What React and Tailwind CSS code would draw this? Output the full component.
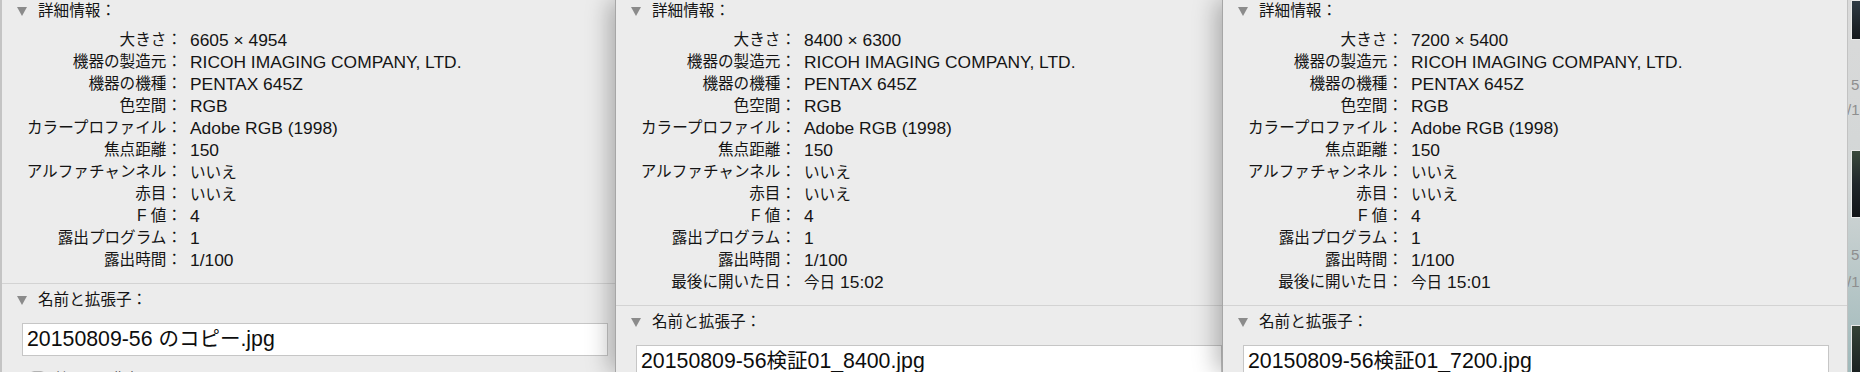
import React from 'react';

const J = ({ children }) => <span className="text-[15.6px]">{children}</span>;

const baseRows = [
  { label: '大きさ', value: null },
  { label: '機器の製造元', value: 'RICOH IMAGING COMPANY, LTD.' },
  { label: '機器の機種', value: 'PENTAX 645Z' },
  { label: '色空間', value: 'RGB' },
  { label: 'カラープロファイル', value: 'Adobe RGB (1998)' },
  { label: '焦点距離', value: '150' },
  { label: 'アルファチャンネル', value: <J>いいえ</J> },
  { label: '赤目', value: <J>いいえ</J> },
  { label: <>F <span>値</span></>, value: '4' },
  { label: '露出プログラム', value: '1' },
  { label: '露出時間', value: '1/100' }
];

const windows = [
  {
    size: '6605 × 4954',
    opened: null,
    file: <>20150809-56&nbsp;<span className="text-[20.5px]">のコピー</span>.jpg</>,
    frame: 'w-[615px] border-l-2 border-[#c4c4c4] z-0',
    checkbox: true
  },
  {
    size: '8400 × 6300',
    opened: '15:02',
    file: <>20150809-56<span className="text-[20.5px]">検証</span>01_8400.jpg</>,
    frame: 'w-[607px] border-l border-[#a6a6a6] z-10 shadow-[-6px_0_22px_rgba(0,0,0,0.28)]'
  },
  {
    size: '7200 × 5400',
    opened: '15:01',
    file: <>20150809-56<span className="text-[20.5px]">検証</span>01_7200.jpg</>,
    frame: 'w-[626px] border-l border-r border-l-[#a6a6a6] border-r-[#c2c2c2] z-20 shadow-[-6px_0_22px_rgba(0,0,0,0.28)]'
  }
];

function Triangle() {
  return (
    <svg width="10" height="9" viewBox="0 0 10 9" className="shrink-0">
      <polygon points="0,0 10,0 5,9" fill="#8b8b8b" />
    </svg>
  );
}

function SectionHeader({ children, className = '' }) {
  return (
    <div className={`flex h-[20px] items-center gap-[11px] pl-[15px] ${className}`}>
      <Triangle />
      <span className="text-[15.6px]">{children}</span>
    </div>
  );
}

function InfoWindow({ data }) {
  const rows = baseRows.map((row) => (row.value === null ? { ...row, value: data.size } : row));
  if (data.opened) {
    rows.push({ label: '最後に開いた日', value: <><J>今日</J> {data.opened}</> });
  }

  return (
    <div className={`relative h-[372px] shrink-0 overflow-hidden bg-[#ececec] ${data.frame}`}>
      <div className="w-[626px]">
        <div className="border-b border-[#d3d3d3] pb-[12px]">
          <SectionHeader className="mt-[1px]">詳細情報：</SectionHeader>
          <div className="mt-[8px]">
            {rows.map((row, i) => (
              <div key={i} className="flex h-[22px] items-center">
                <div className="w-[180px] shrink-0 text-right text-[15.6px] whitespace-nowrap">
                  {row.label}：
                </div>
                <div className="ml-[8px] text-[17.4px] whitespace-nowrap">{row.value}</div>
              </div>
            ))}
          </div>
        </div>

        <SectionHeader className="mt-[6px]">名前と拡張子：</SectionHeader>

        <div className="mx-[20px] mt-[13px] flex h-[33px] items-center border border-[#c6c6c6] bg-white px-[4px] text-[21.3px] text-[#0d0d0d] whitespace-nowrap">
          {data.file}
        </div>

        {data.checkbox && (
          <div className="mt-[12px] flex items-center gap-[10px] pl-[28px]">
            <div className="h-[15px] w-[15px] shrink-0 rounded-[4px] border border-[#b3b3b3] bg-white" />
            <span className="text-[14px] text-[#555]">拡張子を非表示</span>
          </div>
        )}
      </div>
    </div>
  );
}

function SideStrip() {
  return (
    <div className="relative z-30 flex h-[372px] w-[12px] shrink-0 flex-col overflow-hidden bg-gradient-to-b from-[#dadada] via-[#d2d6d6] to-[#9fb9ba] pl-[3px] text-[15px] leading-[18px] text-[#8e8e8e]">
      <div className="h-[40px] w-[12px] shrink-0 border border-[#e9e9e9] bg-gradient-to-b from-[#2f3b44] to-[#14181c]" />
      <div className="mt-[36px] whitespace-nowrap">5</div>
      <div className="mt-[7px] -ml-[4px] whitespace-nowrap">/1</div>
      <div className="mt-[31px] h-[68px] w-[12px] shrink-0 border border-[#e9e9e9] bg-gradient-to-b from-[#3b4a3c] via-[#20262b] to-[#111417]" />
      <div className="mt-[28px] whitespace-nowrap">5</div>
      <div className="mt-[9px] -ml-[4px] whitespace-nowrap">/1</div>
      <div className="mt-[34px] h-[60px] w-[12px] shrink-0 border border-[#e9e9e9] bg-gradient-to-b from-[#344236] to-[#15191c]" />
    </div>
  );
}

export default function App() {
  return (
    <div className="flex h-[372px] w-[1860px] overflow-hidden bg-[#ececec] font-['Liberation_Sans','Noto_Sans_CJK_JP',sans-serif] text-[#141414]">
      {windows.map((w, i) => (
        <InfoWindow key={i} data={w} />
      ))}
      <SideStrip />
    </div>
  );
}
